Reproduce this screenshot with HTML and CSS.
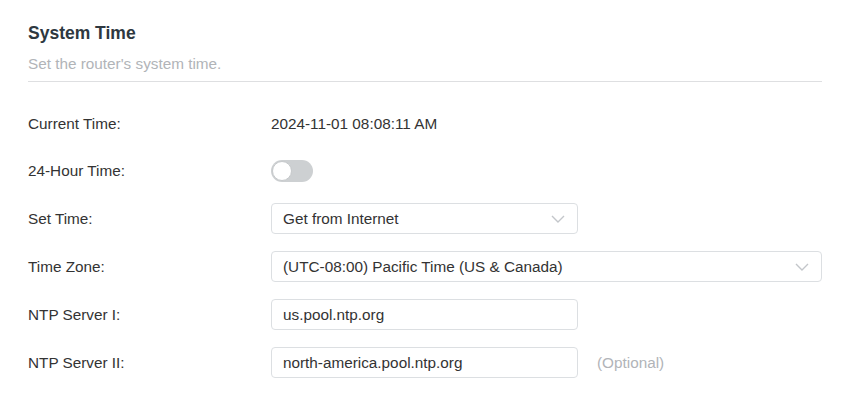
FILE: index.html
```html
<!DOCTYPE html>
<html lang="en">
<head>
<meta charset="utf-8">
<title>System Time</title>
<link rel="stylesheet" href="styles.css">
</head>
<body>
<div class="panel">
  <div class="header">
    <h2 class="title">System Time</h2>
    <p class="subtitle">Set the router's system time.</p>
  </div>
  <div class="form">
    <div class="row">
      <div class="label">Current Time:</div>
      <div class="value">2024-11-01 08:08:11 AM</div>
    </div>
    <div class="row">
      <div class="label">24-Hour Time:</div>
      <div class="value"><span class="toggle"><span class="knob"></span></span></div>
    </div>
    <div class="row tall">
      <div class="label">Set Time:</div>
      <div class="value">
        <div class="field select narrow">
          <span class="field-text">Get from Internet</span>
          <svg class="chevron" width="14" height="8" viewBox="0 0 14 8"><path d="M1 1 L7 7 L13 1" fill="none" stroke="#c3c6ca" stroke-width="1.4"/></svg>
        </div>
      </div>
    </div>
    <div class="row tall">
      <div class="label">Time Zone:</div>
      <div class="value">
        <div class="field select wide">
          <span class="field-text">(UTC-08:00) Pacific Time (US &amp; Canada)</span>
          <svg class="chevron" width="14" height="8" viewBox="0 0 14 8"><path d="M1 1 L7 7 L13 1" fill="none" stroke="#c3c6ca" stroke-width="1.4"/></svg>
        </div>
      </div>
    </div>
    <div class="row tall">
      <div class="label">NTP Server I:</div>
      <div class="value">
        <div class="field narrow"><span class="field-text">us.pool.ntp.org</span></div>
      </div>
    </div>
    <div class="row tall">
      <div class="label">NTP Server II:</div>
      <div class="value">
        <div class="field narrow"><span class="field-text">north-america.pool.ntp.org</span></div>
        <span class="hint">(Optional)</span>
      </div>
    </div>
  </div>
</div>
</body>
</html>
```

FILE: styles.css
```css
html, body {
  margin: 0;
  padding: 0;
  background: #ffffff;
}
body {
  font-family: "Liberation Sans", Arial, sans-serif;
  color: #333333;
  font-size: 15.3px;
}
.panel {
  padding: 22px 44px 0 28px;
}
.header {
  border-bottom: 1px solid #dedfe1;
  padding-bottom: 8px;
}
.title {
  margin: 0;
  font-size: 17.5px;
  font-weight: bold;
  color: #2e3840;
  line-height: 22px;
}
.subtitle {
  margin: 11px 0 0 0;
  font-size: 15.3px;
  color: #b1b4b8;
  line-height: 18px;
}
.form {
  padding-top: 27px;
  display: flex;
  flex-direction: column;
  gap: 17px;
}
.row {
  display: flex;
  align-items: center;
  height: 30px;
}
.row.tall {
  height: 31px;
}
.label {
  width: 243px;
  flex: none;
  line-height: 18px;
}
.value {
  display: flex;
  align-items: center;
  flex: 1;
  line-height: 18px;
}
.toggle {
  position: relative;
  display: block;
  width: 42px;
  height: 22px;
  border-radius: 11px;
  background: #cdd0d2;
}
.knob {
  position: absolute;
  left: 1px;
  top: 1px;
  width: 20px;
  height: 20px;
  border-radius: 50%;
  background: #ffffff;
  box-sizing: border-box;
  border: 1px solid #c6c9cb;
}
.field {
  box-sizing: border-box;
  height: 31px;
  border: 1px solid #dcdfe2;
  border-radius: 4px;
  display: flex;
  align-items: center;
  padding: 0 12px 0 11px;
}
.narrow { width: 307px; }
.wide { width: 551px; }
.field-text {
  flex: 1;
  color: #333333;
}
.chevron {
  flex: none;
}
.hint {
  margin-left: 19px;
  color: #b1b4b8;
}
```
